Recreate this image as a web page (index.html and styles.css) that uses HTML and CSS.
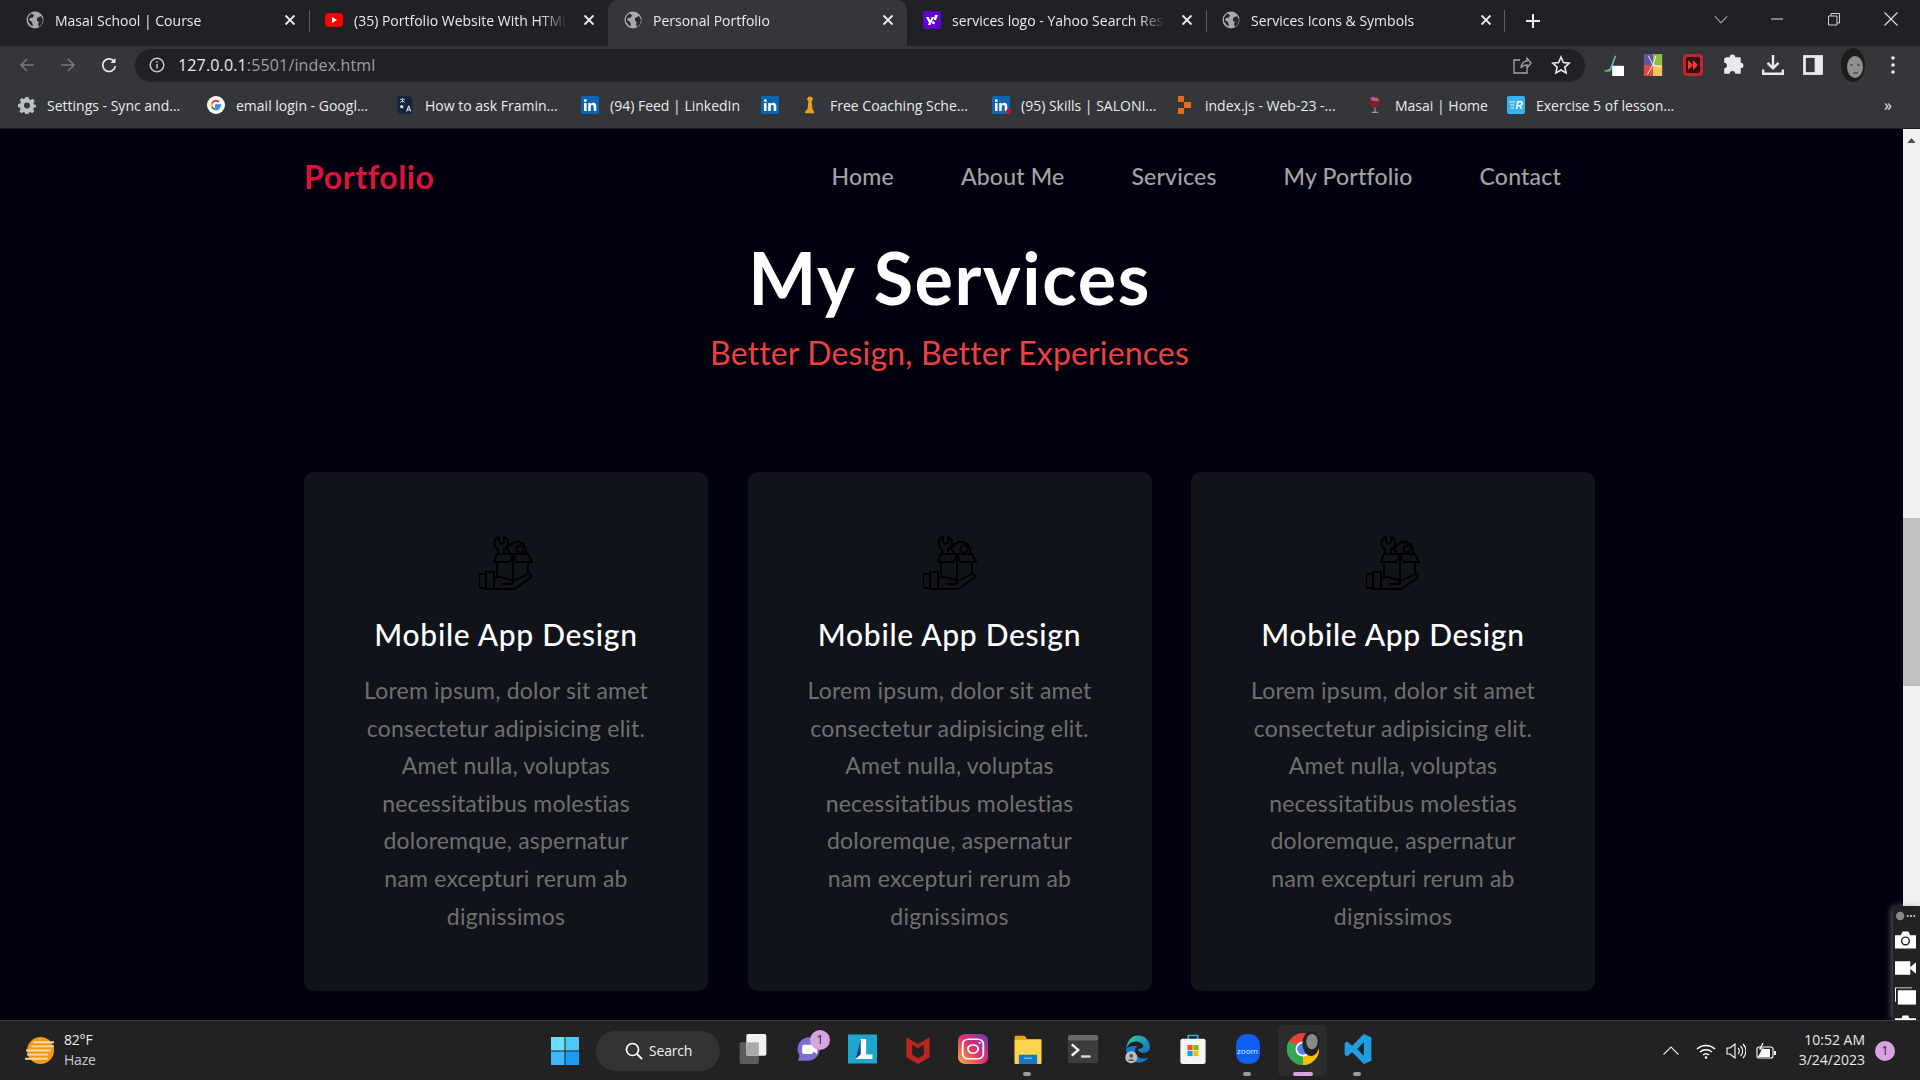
FILE: index.html
```html
<!DOCTYPE html>
<html lang="en">
<head>
<meta charset="utf-8">
<title>Personal Portfolio</title>
<link rel="stylesheet" href="styles.css">
</head>
<body>
<svg class="defs" width="0" height="0" aria-hidden="true">
  <symbol id="globe" viewBox="0 0 18 18"><circle cx="9" cy="9" r="8.5" fill="#a6a8ab"/><path d="M5 2.5l3 1.5-1 2.5-3 .5-1 2 3 2 1 4-2-.5-3-4v-4zM11 7l4-2 2 4-1 4-3 3-1-3 1-2-2-1z" fill="#26282b"/></symbol>
  <symbol id="close" viewBox="0 0 12 12"><path d="M1.5 1.5l9 9M10.5 1.5l-9 9" stroke="#e8eaed" stroke-width="1.8" fill="none"/></symbol>
  <symbol id="in" viewBox="0 0 18 18"><rect width="18" height="18" rx="1.5" fill="#0a66b2"/><path d="M3 7h2.6v8H3zM4.3 3a1.5 1.5 0 110 3 1.5 1.5 0 010-3zM7.2 7h2.5v1.2c.5-.8 1.4-1.4 2.6-1.4 2.2 0 3 1.4 3 3.7V15h-2.6v-4c0-1.1-.3-2-1.4-2s-1.6.9-1.6 2v4H7.2z" fill="#fff"/></symbol>
  <symbol id="service" viewBox="0 0 54 54"><g fill="none" stroke="#000" stroke-width="1.9" stroke-linejoin="round" stroke-linecap="round">
    <path d="M20 1c-3 1-4.500 3.500-4.500 6 0 3 1.500 5 3.500 6v5h6v-5c2-1 4-3 4-6 0-2.500-1.500-5-4-6v5l-2.500 2-2.500-2z"/>
    <circle cx="41" cy="13" r="3.500"/>
    <path d="M31 18c-.5-1-1-2-1-3l-2-1 .5-3 2.500-.5 .5-2.500 2.500-.5 1.500-2 2.500 1 2.500-1 2 2 2.500.5.500 2.500 2 1.500-1 2.500 1 2.500-1.500 1.500"/>
    <path d="M18 18h16l-3 8H15zM34 18h15l4 8H37zM34 18v26M18 26v13M49 26v10"/>
    <path d="M0 38h7v14H0zM7 36h8v17H7z"/>
    <path d="M15 42c4-1.500 7-1.500 10 0l8 2c2 .5 2 4-1 4H24M33 46l16-8c3-1 4 2 2 4L37 52c-1 .7-2 1-3 1H15"/>
  </g></symbol>
</svg>

<header class="tabstrip">
  <div class="tab"><svg class="fav"><use href="#globe"/></svg><span class="tab-title">Masai School | Course</span><svg class="tab-x"><use href="#close"/></svg></div>
  <div class="tab sep"><svg class="fav" viewBox="0 0 18 18"><rect y="2" width="18" height="14" rx="4" fill="#f00"/><path d="M7 6l5 3-5 3z" fill="#fff"/></svg><span class="tab-title">(35) Portfolio Website With HTML CSS</span><svg class="tab-x"><use href="#close"/></svg></div>
  <div class="tab active"><svg class="fav"><use href="#globe"/></svg><span class="tab-title">Personal Portfolio</span><svg class="tab-x"><use href="#close"/></svg></div>
  <div class="tab"><svg class="fav" viewBox="0 0 18 18"><rect width="18" height="18" fill="#5f01d1"/><path d="M3 6h2.6l1.5 3.600L8.700 6h2.500L7.400 14H4.900l1-2.200zM12 4h3l-2 5h-2.300zM10.500 10.200a1.500 1.500 0 110 3 1.500 1.500 0 010-3z" fill="#fff"/></svg><span class="tab-title">services logo - Yahoo Search Results</span><svg class="tab-x"><use href="#close"/></svg></div>
  <div class="tab sep sep-end"><svg class="fav"><use href="#globe"/></svg><span class="tab-title">Services Icons &amp; Symbols</span><svg class="tab-x"><use href="#close"/></svg></div>
  <svg class="new-tab" viewBox="0 0 14 14"><path d="M7 0v14M0 7h14" stroke="#e8eaed" stroke-width="2"/></svg>
  <div class="win-controls">
    <svg class="win-chev" viewBox="0 0 12 8"><path d="M.5 1L6 7l5.500-6" stroke="#9aa0a6" fill="none"/></svg>
    <svg class="win-btn" viewBox="0 0 14 14"><path d="M1 7h12" stroke="#d0d0d0" stroke-width="1.100"/></svg>
    <svg class="win-btn" viewBox="0 0 14 14"><path d="M1.500 4h8.500v9H1.500zM4 4V1.500h8.500V11H10" stroke="#d0d0d0" fill="none"/></svg>
    <svg class="win-btn" viewBox="0 0 14 14"><path d="M.5.500l13 13M13.500.500l-13 13" stroke="#e0e0e0" stroke-width="1.100"/></svg>
  </div>
</header>

<div class="toolbar">
  <svg class="nav-ic" viewBox="0 0 16 16"><path d="M15 8H2M8 2L2 8l6 6" stroke="#74777b" stroke-width="1.700" fill="none"/></svg>
  <svg class="nav-ic" viewBox="0 0 16 16"><path d="M1 8h13M8 2l6 6-6 6" stroke="#74777b" stroke-width="1.700" fill="none"/></svg>
  <svg class="nav-ic" viewBox="0 0 16 16"><path d="M13.500 5A6.300 6.300 0 1014.300 9" stroke="#e8eaed" stroke-width="1.700" fill="none"/><path d="M14.500 1v5h-5z" fill="#e8eaed"/></svg>
  <div class="omnibox">
    <svg class="omni-info" viewBox="0 0 16 16"><circle cx="8" cy="8" r="6.800" stroke="#c4c7c9" stroke-width="1.500" fill="none"/><path d="M8 7v4.500M8 4.300v1.500" stroke="#c4c7c9" stroke-width="1.500"/></svg>
    <span class="url"><span class="url-host">127.0.0.1</span>:5501/index.html</span>
    <svg class="omni-ic" viewBox="0 0 20 20"><path d="M8 5H2v13h13v-5M9 13c0-4 3-7 6-7V3l4 5-4 5v-3c-3 0-5 1-6 3z" stroke="#a4a7aa" stroke-width="1.300" fill="none"/></svg>
    <svg class="omni-ic star" viewBox="0 0 20 20"><path d="M10 2l2.400 5.500 5.800.6-4.300 4 1.200 5.900L10 15l-5.100 3 1.200-5.900-4.300-4 5.800-.6z" stroke="#e8eaed" stroke-width="1.600" fill="none"/></svg>
  </div>
  <div class="ext-row">
    <span class="ext"><svg viewBox="0 0 26 26" class="ext-svg"><path d="M16 2l-6 16-5 2" stroke="#5fb7c7" stroke-width="2" fill="none"/><path d="M3 20h7" stroke="#55b04f" stroke-width="2"/><rect x="12" y="14" width="14" height="12" rx="1" fill="#fff"/></svg></span>
    <span class="ext"><svg viewBox="0 0 20 24" class="ext-svg"><rect width="10" height="12" fill="#6650a4"/><rect x="10" width="10" height="12" fill="#8cbf3f"/><rect y="12" width="10" height="12" fill="#e04b3f"/><rect x="10" y="12" width="10" height="12" fill="#f2c45a"/><path d="M10 12L5 2M10 12l3-10M10 12L4 22M10 12l9 2" stroke="#fff"/></svg></span>
    <span class="ext"><svg viewBox="0 0 20 22" class="ext-svg"><rect width="20" height="22" rx="4" fill="#c8232c"/><rect x="3" y="3" width="14" height="16" rx="2" fill="#2a1415"/><path d="M5 6l5 5-5 5zM10 6l5 5-5 5z" fill="#f33"/></svg></span>
    <span class="ext"><svg viewBox="0 0 20 20" class="ext-svg"><path d="M7 3a2.500 2.500 0 015 0h5v5a2.500 2.500 0 010 5v5h-5a2.500 2.500 0 00-5 0H2v-5a2.500 2.500 0 000-5V5c0-1 1-2 2-2z" fill="#e8eaed"/></svg></span>
    <span class="ext"><svg viewBox="0 0 20 20" class="ext-svg"><path d="M10 1v11M5 8l5 5 5-5" stroke="#e8eaed" stroke-width="2.200" fill="none"/><path d="M1 14v4h18v-4" stroke="#e8eaed" stroke-width="2.200" fill="none"/></svg></span>
    <span class="ext"><svg viewBox="0 0 20 20" class="ext-svg"><rect x="1" y="1" width="18" height="18" fill="#e8eaed"/><rect x="3.500" y="3.500" width="8" height="13" fill="#35363a"/></svg></span>
    <span class="ext"><svg viewBox="0 0 24 34" class="avatar"><ellipse cx="12" cy="17" rx="12" ry="17" fill="#1c1c1c"/><ellipse cx="14" cy="19" rx="8" ry="11" fill="#8f8f8f"/><path d="M9 17h3M16 17h3M12 25h5" stroke="#333"/></svg></span>
    <span class="ext"><svg viewBox="0 0 4 18" class="dots"><circle cx="2" cy="2" r="1.800" fill="#e8eaed"/><circle cx="2" cy="9" r="1.800" fill="#e8eaed"/><circle cx="2" cy="16" r="1.800" fill="#e8eaed"/></svg></span>
  </div>
</div>

<nav class="bookmarks">
  <div class="bm"><svg class="bm-ic" viewBox="0 0 18 18"><path d="M7.500 1h3l.5 2.300 1.500.7 2.100-1.200 2 2.200-1.200 2 .6 1.500L18 9v2l-2.300.7-.6 1.500 1.200 2-2 2.100-2.100-1.200-1.500.6-.5 2.300h-3L7 16.700 5.500 16l-2 1.200-2.200-2 1.200-2L2 11.500 0 11V8l2.300-.5.600-1.500-1.200-2 2-2.100 2 1.200L7 2.500z" fill="#bdc1c6"/><circle cx="9" cy="9.500" r="3" fill="#35363a"/></svg><span>Settings - Sync and...</span></div>
  <div class="bm"><svg class="bm-ic" viewBox="0 0 20 20"><circle cx="10" cy="10" r="10" fill="#fff"/><path d="M16 10.200H10v2.400h3.500c-.5 1.500-1.800 2.300-3.500 2.300" stroke="#4285f4" stroke-width="2.200" fill="none"/><path d="M10 14.900a4.900 4.900 0 01-4.500-3" stroke="#34a853" stroke-width="2.200" fill="none"/><path d="M5.500 12a5 5 0 010-4" stroke="#fbbc05" stroke-width="2.200" fill="none"/><path d="M5.500 8A5 5 0 0113.400 6.500" stroke="#ea4335" stroke-width="2.200" fill="none"/></svg><span>email login - Googl...</span></div>
  <div class="bm"><svg class="bm-ic" viewBox="0 0 18 22"><path d="M0 0h14l4 4v18H3l-3-3z" fill="#14233c"/><path d="M3 4h6M6 3v5M3 8l3-2 3 2" stroke="#dfe6f0"/><circle cx="5" cy="13" r="2" fill="#dfe6f0"/><path d="M11 19l2.500-7 2.500 7M12 17h3" stroke="#fff" stroke-width="1.200" fill="none"/></svg><span>How to ask Framin...</span></div>
  <div class="bm"><svg class="bm-ic"><use href="#in"/></svg><span>(94) Feed | LinkedIn</span></div>
  <div class="bm"><svg class="bm-ic"><use href="#in"/></svg></div>
  <div class="bm"><svg class="bm-ic" viewBox="0 0 14 22"><path d="M3 4l2-3h4l2 3-2 2 1 10 2 3v2H1v-2l3-3 1-10z" fill="#e49f1d"/></svg><span>Free Coaching Sche...</span></div>
  <div class="bm"><span class="bm-dot-wrap"><svg class="bm-ic"><use href="#in"/></svg><i class="bm-dot"></i></span><span>(95) Skills | SALONI...</span></div>
  <div class="bm"><svg class="bm-ic small" viewBox="0 0 14 18"><path d="M0 0h6v6H0zM6 6h7v6H6zM0 12h6v6H0z" fill="#e86a17"/></svg><span>index.js - Web-23 -...</span></div>
  <div class="bm"><svg class="bm-ic" viewBox="0 0 16 22"><circle cx="8" cy="7" r="7" fill="#7c1f2e"/><path d="M2 3l3-2 4 1 3 0-2 4-5 0z" fill="#c54b9c"/><path d="M5 3l6 0 2 3-4 0z" fill="#3aa55e"/><path d="M8 14v6M4 20h8" stroke="#999" stroke-width="1.500"/></svg><span>Masai | Home</span></div>
  <div class="bm"><svg class="bm-ic" viewBox="0 0 18 18"><rect width="18" height="18" rx="2" fill="#38b1f4"/><path d="M2 6h6M3 9h4M4 12h3" stroke="#d8f2ff"/><text x="8.500" y="13" class="bm-r">R</text></svg><span>Exercise 5 of lesson...</span></div>
  <div class="bm-more">»</div>
</nav>

<div class="viewport">
  <main class="page">
    <div class="topbar">
      <a class="logo">Portfolio</a>
      <ul class="menu">
        <li>Home</li><li>About Me</li><li>Services</li><li>My Portfolio</li><li>Contact</li>
      </ul>
    </div>
    <section class="services">
      <h1 class="title">My Services</h1>
      <p class="subtitle">Better Design, Better Experiences</p>
      <div class="cards">
        <article class="card">
          <svg class="card-ic"><use href="#service"/></svg>
          <h3 class="card-title">Mobile App Design</h3>
          <p class="card-text">Lorem ipsum, dolor sit amet<br>consectetur adipisicing elit.<br>Amet nulla, voluptas<br>necessitatibus molestias<br>doloremque, aspernatur<br>nam excepturi rerum ab<br>dignissimos</p>
        </article>
        <article class="card">
          <svg class="card-ic"><use href="#service"/></svg>
          <h3 class="card-title">Mobile App Design</h3>
          <p class="card-text">Lorem ipsum, dolor sit amet<br>consectetur adipisicing elit.<br>Amet nulla, voluptas<br>necessitatibus molestias<br>doloremque, aspernatur<br>nam excepturi rerum ab<br>dignissimos</p>
        </article>
        <article class="card">
          <svg class="card-ic"><use href="#service"/></svg>
          <h3 class="card-title">Mobile App Design</h3>
          <p class="card-text">Lorem ipsum, dolor sit amet<br>consectetur adipisicing elit.<br>Amet nulla, voluptas<br>necessitatibus molestias<br>doloremque, aspernatur<br>nam excepturi rerum ab<br>dignissimos</p>
        </article>
      </div>
    </section>
  </main>
  <aside class="scrollbar">
    <svg class="scroll-up" viewBox="0 0 10 6"><path d="M0 6l5-6 5 6z" fill="#505050"/></svg>
    <div class="scroll-thumb"></div>
  </aside>
  <div class="capture">
    <svg class="cap-top" viewBox="0 0 26 12"><circle cx="6" cy="6" r="5" fill="#888"/><circle cx="15" cy="6" r="1.200" fill="#ddd"/><circle cx="19" cy="6" r="1.200" fill="#ddd"/><circle cx="23" cy="6" r="1.200" fill="#ddd"/></svg>
    <svg class="cap-ic" viewBox="0 0 22 18"><path d="M0 4h6l2-4h6l2 4h6v14H0z" fill="#fff"/><circle cx="11" cy="10" r="4" fill="none" stroke="#222" stroke-width="1.500"/></svg>
    <svg class="cap-ic" viewBox="0 0 22 14"><path d="M0 0h16v14H0zM16 6l6-5v12l-6-5z" fill="#fff"/></svg>
    <svg class="cap-ic" viewBox="0 0 22 18"><path d="M0 0h18v1H1v14H0z" fill="#fff"/><rect x="3" y="3" width="19" height="15" fill="#fff"/></svg>
    <svg class="cap-ic" viewBox="0 0 22 18"><path d="M8 0h6l1 3h7v15H0V3h7z" fill="#fff"/></svg>
  </div>
</div>

<footer class="taskbar">
  <div class="weather">
    <svg class="weather-ic" viewBox="0 0 30 30"><circle cx="16" cy="15" r="13" fill="#f29a12"/><path d="M9 7h20M7 11h22M2 15h24M3 19h20M1 23h22" stroke="#f0dcb0" stroke-width="1.800"/></svg>
    <div class="weather-text"><span class="temp">82°F</span><span class="cond">Haze</span></div>
  </div>
  <svg class="start" viewBox="0 0 28 28"><rect width="13.500" height="13.500" fill="#6fdcfb"/><rect x="14.500" width="13.500" height="13.500" fill="#4cc7f8"/><rect y="14.500" width="13.500" height="13.500" fill="#3fb8f8"/><rect x="14.500" y="14.500" width="13.500" height="13.500" fill="#1a9cf5"/></svg>
  <div class="search"><svg class="search-ic" viewBox="0 0 18 18"><circle cx="7.500" cy="7.500" r="6" stroke="#fff" stroke-width="1.700" fill="none"/><path d="M12 12l5 5" stroke="#fff" stroke-width="2"/></svg><span>Search</span></div>
  <div class="apps">
    <span class="app"><svg class="app-ic" viewBox="0 0 32 36"><rect y="10" width="23" height="26" rx="2" fill="#5c5c5c"/><rect x="8" y="0" width="24" height="26" rx="2" fill="#f1f1f1"/><rect x="8" y="10" width="15" height="16" fill="#a9a9a9"/></svg></span>
    <span class="app"><svg class="app-ic" viewBox="0 0 32 36"><path d="M16 4a14 14 0 110 28H4l2-6A14 14 0 0116 4z" fill="#7b6fd6"/><rect x="9" y="13" width="13" height="11" rx="2" fill="#fff"/><path d="M22 16l5-3v11l-5-3z" fill="#fff"/></svg><i class="app-badge">1</i></span>
    <span class="app"><svg class="app-ic l-tile" viewBox="0 0 32 32"><rect width="32" height="32" fill="#1fa6cf"/><path d="M14 5h6v17h7v5H8z" fill="#fff"/><path d="M14 5L8 27l6-5z" fill="#0f3f8a"/></svg></span>
    <span class="app"><svg class="app-ic" viewBox="0 0 28 36"><path d="M0 4l14 8 14-8v24l-14 8-14-8z" fill="#b8261f"/><path d="M7 13l7 4 7-4v12l-7 4-7-4z" fill="#222"/></svg></span>
    <span class="app"><svg class="app-ic wide" viewBox="0 0 32 40" preserveAspectRatio="none"><defs><linearGradient id="ig" x1="0" y1="1" x2="1" y2="0"><stop offset="0" stop-color="#fdb03c"/><stop offset=".5" stop-color="#e1306c"/><stop offset="1" stop-color="#6a3bc0"/></linearGradient></defs><rect width="32" height="40" rx="8" fill="url(#ig)"/><rect x="5" y="7" width="22" height="26" rx="6" fill="none" stroke="#fff" stroke-width="2"/><circle cx="16" cy="20" r="5.500" fill="none" stroke="#fff" stroke-width="2"/><circle cx="23" cy="12" r="1.300" fill="#fff"/></svg></span>
    <span class="app"><svg class="app-ic wide" viewBox="0 0 32 36"><path d="M0 2h12l3 4h17v28H0z" fill="#e2a510"/><rect y="7" width="32" height="29" fill="#fbd34c"/><rect x="5" y="25" width="22" height="11" rx="1" fill="#1478c9"/><path d="M11 29h10" stroke="#7fc4f2" stroke-width="1.500"/></svg></span>
    <span class="app"><svg class="app-ic wide" viewBox="0 0 32 30"><rect width="32" height="30" rx="2" fill="#3c3c3c"/><rect width="32" height="6" rx="2" fill="#6a6a6a"/><path d="M4 10l7 6-7 6" stroke="#fff" stroke-width="2.500" fill="none"/><path d="M14 23h10" stroke="#ddd" stroke-width="2.500"/></svg></span>
    <span class="app"><svg class="app-ic wide" viewBox="0 0 32 40"><defs><linearGradient id="ed" x1="0" y1="0" x2="1" y2="1"><stop offset="0" stop-color="#2fd1a0"/><stop offset="1" stop-color="#1166c8"/></linearGradient></defs><path d="M16 2c10 0 16 8 16 16 0 4-3 7-8 7-6 0-8-3-8-5 4 0 7-1 7-4s-5-6-10-6C7 10 2 14 0 20 1 10 7 2 16 2z" fill="url(#ed)"/><path d="M0 20c0 10 8 18 16 18 6 0 11-2 14-7-5 3-14 2-17-4-2-4-1-8 2-11-6 0-12 0-15 4z" fill="#1278cc"/><circle cx="7" cy="31" r="8" fill="#bdbdbd"/><circle cx="7" cy="29" r="2.500" fill="#555"/><path d="M3 36c0-3 8-3 8 0" fill="#555"/></svg></span>
    <span class="app"><svg class="app-ic wide" viewBox="0 0 32 38"><path d="M10 7V2h12v5" stroke="#28b4e8" stroke-width="2" fill="none"/><rect y="6" width="32" height="32" rx="3" fill="#f4f4f4"/><rect x="9" y="14" width="6.500" height="6.500" fill="#f25022"/><rect x="16.500" y="14" width="6.500" height="6.500" fill="#7fba00"/><rect x="9" y="21.500" width="6.500" height="6.500" fill="#00a4ef"/><rect x="16.500" y="21.500" width="6.500" height="6.500" fill="#ffb900"/></svg></span>
    <span class="app"><svg class="app-ic wide" viewBox="0 0 32 40"><rect width="32" height="40" rx="14" fill="#0f5ef0"/></svg><span class="zoom-label">zoom</span></span>
    <span class="app app-on"><svg class="app-ic chrome" viewBox="0 0 32 32"><circle cx="16" cy="16" r="16" fill="#e94235"/><path d="M16 16L2 24A16 16 0 0016 32z" fill="#34a853"/><path d="M2 8a16 16 0 000 16l14-8z" fill="#34a853"/><path d="M16 32A16 16 0 0030 8H16z" fill="#fbbc04"/><circle cx="16" cy="16" r="7.500" fill="#fff"/><circle cx="16" cy="16" r="5.800" fill="#4285f4"/></svg><svg class="chrome-av" viewBox="0 0 18 26"><ellipse cx="9" cy="13" rx="9" ry="13" fill="#222"/><ellipse cx="10" cy="11" rx="6" ry="8" fill="#8a8a8a"/></svg></span>
    <span class="app"><svg class="app-ic wide" viewBox="0 0 32 36"><path d="M23 0l9 4v28l-9 4-14-14-6 5-3-2V11l3-2 6 5zM23 10l-8 8 8 8z" fill="#1f9de0"/></svg></span>
    <i class="ind ind-files"></i><i class="ind ind-zoom"></i><i class="ind ind-chrome"></i><i class="ind ind-code"></i>
  </div>
  <div class="tray">
    <svg class="tray-ic chev" viewBox="0 0 16 9"><path d="M.5 8.500L8 1l7.500 7.500" stroke="#e6e6e6" fill="none" stroke-width="1.100"/></svg>
    <svg class="tray-ic" viewBox="0 0 20 16"><path d="M1 6a13 13 0 0118 0M4 9a9 9 0 0112 0M7 12a4.500 4.500 0 016 0" stroke="#fff" stroke-width="1.500" fill="none"/><circle cx="10" cy="14.500" r="1.300" fill="#fff"/></svg>
    <svg class="tray-ic" viewBox="0 0 20 16"><path d="M1 5h3l5-4v14l-5-4H1z" stroke="#fff" stroke-width="1.100" fill="none"/><path d="M12 5a4 4 0 010 6M14.500 3a7 7 0 010 10M17 1a10 10 0 010 14" stroke="#fff" stroke-width="1.100" fill="none"/></svg>
    <svg class="tray-ic" viewBox="0 0 20 16"><rect x="1" y="4" width="16" height="11" rx="2" stroke="#fff" stroke-width="1.100" fill="none"/><path d="M2 14l4-8h8v8z" fill="#fff"/><path d="M18 8h2v4h-2z" fill="#fff"/><path d="M7 0L4 6h3l-2 5" stroke="#fff" stroke-width="1.200" fill="none"/></svg>
    <div class="clock"><span>10:52 AM</span><span>3/24/2023</span></div>
    <i class="notif">1</i>
  </div>
</footer>
</body>
</html>
```

FILE: styles.css
```css
* { box-sizing: border-box; margin: 0; padding: 0; }
html, body { width: 1920px; height: 1080px; overflow: hidden; }
body { display: flex; flex-direction: column; background: #00000f; font-family: "Open Sans", "Noto Sans", sans-serif; color: #e8eaed; }
.defs { position: absolute; }
i { font-style: normal; }

/* Browser chrome */
.tabstrip { height: 46px; flex: none; display: flex; align-items: stretch; padding-left: 10px; background: #202124; }
.tab { width: 299px; flex: none; display: flex; align-items: center; padding: 0 13px 6px 16px; position: relative; border-radius: 10px 10px 0 0; font-size: 14px; letter-spacing: 0; }
.tab.active { background: #35363a; }
.tab.sep::before { content: ""; position: absolute; left: 0; top: 10px; height: 22px; width: 1px; background: #5f6063; }
.tab.sep-end::after { content: ""; position: absolute; right: 0; top: 10px; height: 22px; width: 1px; background: #5f6063; }
.fav { width: 18px; height: 18px; flex: none; margin-right: 11px; }
.tab-title { flex: 1; white-space: nowrap; overflow: hidden; -webkit-mask-image: linear-gradient(90deg, #000 88%, transparent 100%); mask-image: linear-gradient(90deg, #000 88%, transparent 100%); }
.tab-x { width: 12px; height: 12px; flex: none; margin-left: 16px; }
.new-tab { width: 14px; height: 14px; flex: none; margin: 14px 0 0 21px; }
.win-controls { display: flex; align-items: center; margin-left: auto; height: 38px; }
.win-chev { width: 14px; height: 9px; margin-right: 42px; }
.win-btn { width: 14px; height: 14px; margin-right: 43px; }
.win-btn:last-child { margin-right: 22px; }

.toolbar { height: 38px; flex: none; display: flex; align-items: center; padding-left: 19px; background: #35363a; }
.nav-ic { width: 16px; height: 16px; margin-right: 25px; flex: none; }
.omnibox { width: 1450px; height: 33px; margin-left: -7px; display: flex; align-items: center; padding: 0 14px; background: #202124; border-radius: 17px; flex: none; }
.omni-info { width: 16px; height: 16px; flex: none; margin-right: 13px; }
.url { flex: 1; font-size: 16px; letter-spacing: .15px; color: #9aa0a6; }
.url-host { color: #e8eaed; }
.omni-ic { width: 20px; height: 20px; flex: none; margin-left: 19px; }
.ext-row { display: flex; margin-left: 8px; }
.ext { width: 40px; display: flex; justify-content: center; align-items: center; }
.ext-svg { width: 22px; height: 22px; }
.avatar { width: 26px; height: 34px; }
.dots { width: 4px; height: 18px; }

.bookmarks { height: 45px; flex: none; display: grid; grid-template-columns: 189px 189px 185px 180px 40px 191px 184px 190px 141px 1fr 36px; align-items: center; padding: 0 0 2px 18px; background: #35363a; border-bottom: 1px solid #1a1a1c; font-size: 14px; letter-spacing: 0; }
.bm { display: flex; align-items: center; gap: 11px; white-space: nowrap; }
.bm-ic { width: 18px; height: 18px; flex: none; }
.bm-r { font: italic 700 10px "Liberation Sans", sans-serif; fill: #fff; }
.bm-dot-wrap { position: relative; display: flex; }
.bm-dot { position: absolute; right: -1px; bottom: 0; width: 5px; height: 5px; border-radius: 50%; background: #d0121b; }
.bm-more { font-size: 16px; color: #e8eaed; }

/* Page */
.viewport { flex: 1; min-height: 0; display: flex; position: relative; }
.page { flex: 1; min-width: 0; padding: 0 308px 0 304px; overflow: hidden; font-family: Lato, "Open Sans", sans-serif; font-variant-ligatures: none; }
.topbar { height: 94px; display: flex; align-items: center; justify-content: space-between; padding-right: 34px; }
.logo { font-size: 32px; font-weight: 700; color: #dc143c; letter-spacing: .6px; }
.menu { display: flex; gap: 67px; list-style: none; font-size: 23px; color: #a3a3a3; font-weight: 500; letter-spacing: .2px; }
.services { text-align: center; }
.title { font-size: 72px; line-height: 88px; font-weight: 700; color: #fff; margin-top: 10px; letter-spacing: 1.5px; }
.subtitle { font-size: 32px; line-height: 40px; margin-top: 12px; color: #ef4040; letter-spacing: .15px; }
.cards { display: grid; grid-template-columns: repeat(3, 404px); justify-content: space-between; margin-top: 99px; }
.card { height: 519px; padding-top: 64px; background: #10131a; border-radius: 10px; display: flex; flex-direction: column; align-items: center; }
.card-ic { width: 54px; height: 54px; flex: none; }
.card-title { font-size: 30px; line-height: 40px; font-weight: 500; color: #fff; margin-top: 24px; letter-spacing: .7px; }
.card-text { font-size: 23px; line-height: 37.6px; color: #6f6f6f; margin-top: 18px; letter-spacing: .2px; }

.scrollbar { width: 17px; flex: none; background: #f1f1f1; position: relative; }
.scroll-up { position: absolute; left: 4px; top: 9px; width: 9px; height: 5px; }
.scroll-thumb { position: absolute; left: 0; top: 389px; width: 100%; height: 168px; background: #c1c1c1; }
.capture { position: absolute; right: 0; bottom: 0; width: 27px; height: 114px; padding: 5px 0 0 2px; background: #222; border-radius: 5px 0 0 0; display: flex; flex-direction: column; gap: 10px; box-shadow: -2px 0 6px rgba(150,150,170,.55); overflow: hidden; }
.cap-top { width: 22px; height: 10px; flex: none; }
.cap-ic { width: 21px; height: 18px; flex: none; }

/* Taskbar */
.taskbar { height: 60px; flex: none; display: flex; align-items: center; padding-left: 24px; background: #222; border-top: 1px solid #3c3c3c; position: relative; }
.weather { width: 527px; display: flex; align-items: center; gap: 9px; flex: none; }
.weather-ic { width: 31px; height: 31px; }
.weather-text { display: flex; flex-direction: column; font-size: 14px; line-height: 20px; letter-spacing: -.2px; padding-bottom: 2px; }
.cond { color: #c9c9c9; }
.start { width: 28px; height: 28px; flex: none; margin-right: 17px; }
.search { width: 124px; height: 40px; border-radius: 20px; background: #333; display: flex; align-items: center; gap: 6px; padding-left: 29px; font-size: 14px; letter-spacing: -.2px; flex: none; color: #f0f0f0; }
.search-ic { width: 18px; height: 18px; flex: none; }
.apps { display: flex; margin-left: 5px; flex: none; position: relative; height: 100%; }
.app { width: 55px; display: flex; justify-content: center; align-items: center; position: relative; padding-bottom: 3px; }
.app-ic { width: 28px; height: 30px; }
.app-ic.wide { width: 30px; height: 30px; }
.app-ic.l-tile { width: 29px; height: 30px; }
.app-badge { position: absolute; left: 30px; top: 9px; width: 20px; height: 20px; border-radius: 50%; background: #d9a2e2; color: #222; font-size: 12px; line-height: 20px; text-align: center; }
.zoom-label { position: absolute; left: 0; width: 100%; top: 24px; text-align: center; font-size: 8px; color: #cfe; }
.app-on { background: #2c2c2c; border-radius: 5px; margin: 4px 3px; width: 49px; }
.chrome { width: 32px; height: 32px; }
.chrome-av { position: absolute; left: 24px; top: 6px; width: 18px; height: 25px; }
.ind { position: absolute; bottom: 4px; height: 4px; width: 8px; border-radius: 2px; background: #9b9b9b; }
.ind-files { left: 298px; }
.ind-zoom { left: 518px; }
.ind-chrome { left: 568px; width: 20px; background: #d9a2e2; }
.ind-code { left: 628px; }
.tray { display: flex; align-items: center; margin-left: auto; padding-right: 25px; }
.tray-ic { width: 20px; height: 16px; margin-right: 10px; flex: none; }
.chev { width: 16px; height: 9px; margin-right: 17px; }
.clock { display: flex; flex-direction: column; align-items: flex-end; font-size: 14px; line-height: 20px; margin: 0 10px 0 13px; color: #e8e8e8; padding-bottom: 2px; }
.notif { width: 20px; height: 20px; border-radius: 50%; background: #d9a2e2; color: #222; font-size: 12px; line-height: 20px; text-align: center; }
```
